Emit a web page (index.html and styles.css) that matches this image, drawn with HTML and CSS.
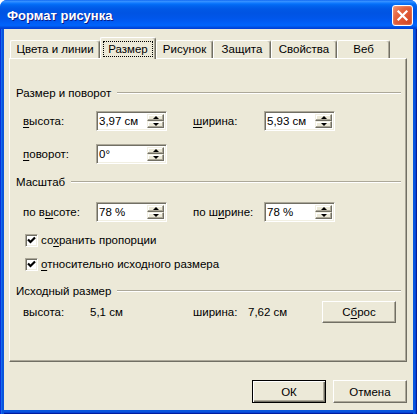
FILE: index.html
```html
<!DOCTYPE html>
<html lang="ru">
<head>
<meta charset="utf-8">
<title>Формат рисунка</title>
<link rel="stylesheet" href="styles.css">
</head>
<body>
<div class="window">
  <div class="titlebar">
    <span class="title">Формат рисунка</span>
    <div class="close">
      <svg width="19" height="19" viewBox="0 0 19 19"><path d="M5.5 5.5 L13.5 13.5 M13.5 5.5 L5.5 13.5" stroke="#fff" stroke-width="2.2" stroke-linecap="square" fill="none"/></svg>
    </div>
  </div>
  <div class="frame">
    <div class="client">
      <div class="tabs">
        <div class="tab t1">Цвета и линии</div>
        <div class="tab t2 active"><span class="focus">Размер</span></div>
        <div class="tab t3">Рисунок</div>
        <div class="tab t4">Защита</div>
        <div class="tab t5">Свойства</div>
        <div class="tab t6">Веб</div>
      </div>
      <div class="panel">
        <div class="ghead g1"><span>Размер и поворот</span><i class="rule"></i></div>
        <div class="row r1">
          <span class="lbl"><u>в</u>ысота:</span>
          <div class="spin"><span class="val">3,97 см</span><span class="arrows"><b class="up"></b><b class="dn"></b></span></div>
          <span class="lbl lbl2"><u>ш</u>ирина:</span>
          <div class="spin"><span class="val">5,93 см</span><span class="arrows"><b class="up"></b><b class="dn"></b></span></div>
        </div>
        <div class="row r2">
          <span class="lbl"><u>п</u>оворот:</span>
          <div class="spin"><span class="val">0°</span><span class="arrows"><b class="up"></b><b class="dn"></b></span></div>
        </div>
        <div class="ghead g2"><span>Масштаб</span><i class="rule"></i></div>
        <div class="row r3">
          <span class="lbl">по в<u>ы</u>соте:</span>
          <div class="spin"><span class="val">78 %</span><span class="arrows"><b class="up"></b><b class="dn"></b></span></div>
          <span class="lbl lbl2">по ш<u>и</u>рине:</span>
          <div class="spin"><span class="val">78 %</span><span class="arrows"><b class="up"></b><b class="dn"></b></span></div>
        </div>
        <div class="check c1">
          <span class="cb"><svg width="9" height="9" viewBox="0 0 9 9"><path d="M1 3.5 L3.5 6 L8 1.5" stroke="#000" stroke-width="2.2" fill="none"/></svg></span>
          <span>со<u>х</u>ранить пропорции</span>
        </div>
        <div class="check c2">
          <span class="cb"><svg width="9" height="9" viewBox="0 0 9 9"><path d="M1 3.5 L3.5 6 L8 1.5" stroke="#000" stroke-width="2.2" fill="none"/></svg></span>
          <span><u>о</u>тносительно исходного размера</span>
        </div>
        <div class="ghead g3"><span>Исходный размер</span><i class="rule"></i></div>
        <div class="row r4">
          <span class="olbl">высота:</span>
          <span class="oval">5,1 см</span>
          <span class="olbl2">ширина:</span>
          <span class="oval2">7,62 см</span>
          <button class="btn">С<u>б</u>рос</button>
        </div>
      </div>
      <div class="buttons">
        <button class="btn default">ОК</button>
        <button class="btn">Отмена</button>
      </div>
    </div>
  </div>
</div>
</body>
</html>
```
FILE: styles.css
```css
* { box-sizing: border-box; }
html, body { margin: 0; padding: 0; background: #fff; }
body {
  font-family: "Liberation Sans", Arial, sans-serif;
  font-size: 11.5px;
  color: #000;
}
u { text-decoration: underline; text-underline-offset: 2px; }

.window {
  width: 417px;
  height: 414px;
  display: flex;
  flex-direction: column;
  border-radius: 7px 7px 0 0;
  overflow: hidden;
  background: #0055EA;
}

.titlebar {
  height: 29px;
  flex: none;
  display: flex;
  align-items: center;
  justify-content: space-between;
  padding: 0 4px 0 7px;
  background: linear-gradient(to bottom,
    #0058EE 0, #3D95FF 1px, #2A8AFF 2px, #157CFF 3px, #0470F8 4px,
    #0263EE 6px, #0058E6 9px, #0054E3 13px, #0056EA 18px,
    #005CF4 22px, #0063FB 25px, #0061F8 26px, #0050E2 27px, #003DD7 29px);
}
.title {
  color: #fff;
  font-weight: bold;
  font-size: 13px;
  text-shadow: 1px 1px 0 #0A1C8A;
  margin-top: 1px;
}
.close {
  width: 21px;
  height: 21px;
  margin-top: 2px;
  border: 1px solid #fff;
  border-radius: 3px;
  background: linear-gradient(135deg, #F1906F 0, #E4653F 35%, #DD5330 65%, #CC4220 100%);
  box-shadow: inset 0 0 2px #F7B79E;
  display: flex;
  align-items: center;
  justify-content: center;
}

.frame {
  flex: 1;
  display: flex;
  padding: 0 4px 4px 4px;
  background:
    linear-gradient(to right, #0831D9 0, #0831D9 1px, #166AEE 1px, #166AEE 2px, #0855DD 2px, #0855DD 4px, transparent 4px),
    linear-gradient(to left, #001EA0 0, #001EA0 1px, #0843D5 1px, #0843D5 2px, #0855DD 2px, #0855DD 4px, transparent 4px),
    linear-gradient(to top, #001EA0 0, #001EA0 1px, #0843D5 1px, #0843D5 2px, #0855DD 2px);
}
.client {
  flex: 1;
  background: #ECE9D8;
  display: flex;
  flex-direction: column;
}

/* tabs */
.tabs {
  height: 21px;
  margin: 8px 0 0 6px;
  display: flex;
  align-items: flex-end;
  position: relative;
  z-index: 1;
}
.tab {
  height: 18px;
  background: #ECE9D8;
  border-top: 1px solid #fff;
  border-left: 1px solid #fff;
  border-right: 1px solid #716F64;
  border-radius: 2px 3px 0 0;
  box-shadow: inset -1px 0 #ACA899;
  display: flex;
  align-items: center;
  justify-content: center;
  padding-bottom: 1px;
  white-space: nowrap;
}
.t1 { width: 90px; }
.t2 { width: 56px; }
.t3 { width: 57px; }
.t4 { width: 58px; }
.t5 { width: 66px; }
.t6 { width: 53px; }
.tab.active {
  height: 22px;
  margin-bottom: -1px;
  align-items: flex-start;
  padding: 3px 0 0;
}
.focus {
  border: 1px dotted #000;
  padding: 0 4px;
  line-height: 14px;
}

/* panel */
.panel {
  height: 304px;
  margin: 0 6px 0 5px;
  border-top: 1px solid #fff;
  border-left: 1px solid #fff;
  border-right: 1px solid #716F64;
  border-bottom: 1px solid #716F64;
  box-shadow: inset -1px -1px #ACA899;
  display: flex;
  flex-direction: column;
}
.ghead {
  height: 16px;
  display: flex;
  align-items: center;
  padding-left: 6px;
  margin-right: 5px;
  white-space: nowrap;
}
.ghead .rule {
  flex: 1;
  height: 2px;
  margin-left: 6px;
  border-top: 1px solid #ACA899;
  border-bottom: 1px solid #fff;
}
.g1 { margin-top: 26px; }
.g2 { margin-top: 10px; }
.g3 { margin-top: 11px; }

.row {
  height: 20px;
  display: flex;
  align-items: center;
  padding-left: 13px;
}
.r1 { margin-top: 10px; }
.r2 { margin-top: 13px; }
.r3 { margin-top: 12px; }
.r4 { margin-top: 2px; height: 22px; }

.lbl { width: 73px; }
.lbl2 { width: 71px; margin-left: 26px; }

.spin {
  width: 71px;
  height: 20px;
  display: flex;
  background: #fff;
  border: 1px solid;
  border-color: #ACA899 #fff #fff #ACA899;
  box-shadow: inset 1px 1px #716F64, inset -1px -1px #F1EFE2;
  padding: 2px;
}
.spin .val {
  flex: 1;
  line-height: 14px;
}
.arrows {
  width: 17px;
  display: flex;
  flex-direction: column;
}
.arrows b {
  flex: 1;
  background: #ECE9D8;
  border: 1px solid;
  border-color: #F1EFE2 #716F64 #716F64 #F1EFE2;
  box-shadow: inset -1px -1px #ACA899, inset 1px 1px #fff;
  display: flex;
  align-items: center;
  justify-content: center;
}
.arrows b::after {
  content: "";
  width: 0;
  height: 0;
  border-left: 3px solid transparent;
  border-right: 3px solid transparent;
}
.arrows .up::after { border-bottom: 3px solid #000; }
.arrows .dn::after { border-top: 3px solid #000; }

.check {
  height: 16px;
  display: flex;
  align-items: center;
  padding-left: 15px;
  gap: 3px;
  white-space: nowrap;
}
.c1 { margin-top: 10px; }
.c2 { margin-top: 8px; }
.cb {
  width: 13px;
  height: 13px;
  flex: none;
  background: #fff;
  border: 1px solid;
  border-color: #ACA899 #fff #fff #ACA899;
  box-shadow: inset 1px 1px #716F64, inset -1px -1px #F1EFE2;
  display: flex;
  align-items: center;
  justify-content: center;
}

.olbl { width: 67px; }
.oval { width: 103px; }
.olbl2 { width: 55px; }
.oval2 { width: 74px; }

.btn {
  width: 74px;
  height: 22px;
  padding: 0;
  margin: 0;
  font: inherit;
  color: #000;
  background: #ECE9D8;
  border: 1px solid;
  border-color: #fff #716F64 #716F64 #fff;
  box-shadow: inset -1px -1px #ACA899;
  border-radius: 0;
  display: flex;
  align-items: center;
  justify-content: center;
}
.btn.default {
  border: 1px solid #000;
  box-shadow: inset 1px 1px #fff, inset -1px -1px #716F64, inset -2px -2px #ACA899;
}

.buttons {
  display: flex;
  justify-content: flex-end;
  gap: 7px;
  margin: 18px 6px 0 0;
}
.buttons .btn { height: 23px; }
```
